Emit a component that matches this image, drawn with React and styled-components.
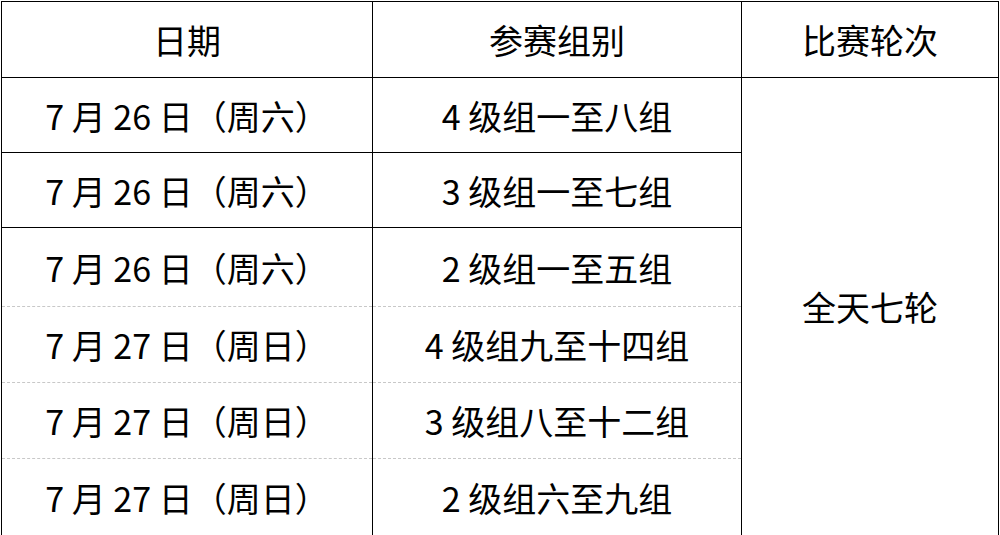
import styled, { createGlobalStyle } from "styled-components"

const GlobalStyle = createGlobalStyle`
  html, body {
    margin: 0;
    padding: 0;
    background: #fff;
  }
  body {
    width: 1000px;
    height: 535px;
    overflow: hidden;
  }
`

const SPage = styled.div`
  padding: 1px 0 0 1px;
`

const STable = styled.table`
  width: 997px;
  border-collapse: collapse;
  table-layout: fixed;
  font-family: "Noto Sans CJK SC", "Noto Sans", sans-serif;
  font-size: 34px;
  color: #000;

  & td, & th {
    border: 1px solid #000;
    text-align: center;
    vertical-align: middle;
    padding: 0;
    font-weight: normal;
    white-space: nowrap;
  }
`

const SCol = styled.col`
  width: ${p => p.w}px;
`

const SRow = styled.tr`
  height: ${p => p.h}px;

  & > td:not([rowspan]) {
    ${p => (p.dashTop ? "border-top: 1px dashed #c8c8c8;" : "")}
    ${p => (p.dashBottom ? "border-bottom: 1px dashed #c8c8c8;" : "")}
  }
`

const rows = [
  {date: "7 月 26 日（周六）", group: "4 级组一至八组", h: 75},
  {date: "7 月 26 日（周六）", group: "3 级组一至七组", h: 75},
  {date: "7 月 26 日（周六）", group: "2 级组一至五组", h: 79},
  {date: "7 月 27 日（周日）", group: "4 级组九至十四组", h: 76},
  {date: "7 月 27 日（周日）", group: "3 级组八至十二组", h: 76},
  {date: "7 月 27 日（周日）", group: "2 级组六至九组", h: 77},
]

const App = () => (
  <SPage>
    <GlobalStyle />
    <STable>
      <colgroup>
        <SCol w={371} />
        <SCol w={369} />
        <SCol w={257} />
      </colgroup>
      <thead>
        <SRow h={76}>
          <th>日期</th>
          <th>参赛组别</th>
          <th>比赛轮次</th>
        </SRow>
      </thead>
      <tbody>
        {rows.map((r, i) => (
          <SRow key={i} h={r.h} dashTop={i >= 3} dashBottom={i >= 2 && i < rows.length - 1}>
            <td>{r.date}</td>
            <td>{r.group}</td>
            {i === 0 && <td rowSpan={rows.length}>全天七轮</td>}
          </SRow>
        ))}
      </tbody>
    </STable>
  </SPage>
)

export default App
